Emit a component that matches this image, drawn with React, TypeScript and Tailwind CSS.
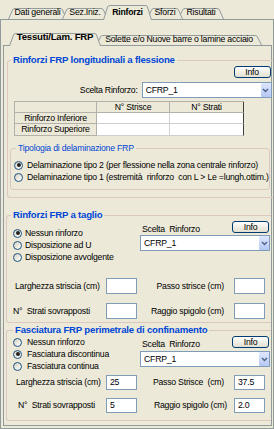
import React from "react";

type TabDef = {
  label: string;
  w: number;
  h: number;
  cls: string;
  selected?: boolean;
};

const outerTabs: TabDef[] = [
  { label: "Dati generali", w: 59, h: 11, cls: "w-[59px] h-[11px] z-[1]" },
  { label: "Sez.Iniz.", w: 46, h: 11, cls: "w-[46px] h-[11px] z-[2] -ml-[5px]" },
  { label: "Rinforzi", w: 49, h: 15, cls: "w-[49px] h-[15px] z-[10] -ml-[5px] -mb-[1px] pt-[3px] font-bold", selected: true },
  { label: "Sforzi", w: 36, h: 11, cls: "w-[36px] h-[11px] z-[4] -ml-[5px]" },
  { label: "Risultati", w: 46, h: 11, cls: "w-[46px] h-[11px] z-[3] -ml-[5px]" },
];

const innerTabs: TabDef[] = [
  { label: "Tessuti/Lam. FRP", w: 92, h: 13, cls: "w-[92px] h-[13px] z-[10] -mb-[1px] font-bold text-[9.6px] tracking-[-0.2px]", selected: true },
  { label: "Solette e/o Nuove barre o lamine acciaio", w: 166, h: 10, cls: "w-[166px] h-[10px] z-[1] -ml-[5px]" },
];

function Tab({ label, w, h, cls }: TabDef) {
  const s = 5;
  const d = `M0.5 ${h} L${s - 0.5} 2 Q${s} 0.5 ${s + 2} 0.5 L${w - s - 2} 0.5 Q${w - s} 0.5 ${w - s + 0.5} 2 L${w - 0.5} ${h}`;
  return (
    <div className={`relative shrink-0 flex justify-center items-start ${cls}`}>
      <svg className="absolute inset-0" width={w} height={h} viewBox={`0 0 ${w} ${h}`}>
        <path d={d} fill="#ece9d8" stroke="#919b9c" strokeWidth="1" />
      </svg>
      <span className="relative whitespace-nowrap leading-[8px]">{label}</span>
    </div>
  );
}

function InfoButton() {
  return (
    <button className="w-[37px] h-[12px] border border-[#003c74] rounded-[3px] bg-linear-to-b from-white to-[#e2dfcf] flex items-center justify-center leading-none">
      Info
    </button>
  );
}

function Select() {
  return (
    <div className="w-[130px] h-[16px] border border-[#7f9db9] bg-white flex items-center">
      <span className="flex-1 pl-[3px]">CFRP_1</span>
      <span className="w-[10px] h-[14px] bg-linear-to-b from-[#dfe7fd] to-[#b5c7f4] rounded-[1px] flex items-center justify-center">
        <svg width="7" height="5" viewBox="0 0 7 5">
          <path d="M1 1 L3.5 3.5 L6 1" fill="none" stroke="#4d6185" strokeWidth="1.4" />
        </svg>
      </span>
    </div>
  );
}

function Radio({ label, checked, gap = "ml-[4px]" }: { label: string; checked?: boolean; gap?: string }) {
  return (
    <div className="flex items-center h-[12px]">
      <span className="w-[9px] h-[9px] rounded-full border border-[#1c5180] bg-linear-to-br from-[#d6d3c2] to-white flex items-center justify-center shrink-0">
        {checked && <span className="w-[4px] h-[4px] rounded-full bg-[#222]" />}
      </span>
      <span className={`${gap} whitespace-pre`}>{label}</span>
    </div>
  );
}

function Input({ value }: { value?: string }) {
  return (
    <div className="w-[31px] self-stretch border border-[#7f9db9] bg-white pl-[3px] flex items-center">
      {value}
    </div>
  );
}

function FieldRow(props: {
  label: string;
  labelPad: string;
  value?: string;
  right: string;
  rightPad: string;
  rightValue?: string;
  box: string;
}) {
  return (
    <div className={`flex items-center ${props.box}`}>
      <div className={`w-[99px] whitespace-pre ${props.labelPad}`}>{props.label}</div>
      <Input value={props.value} />
      <div className={`w-[97px] text-right whitespace-pre ${props.rightPad}`}>{props.right}</div>
      <Input value={props.rightValue} />
    </div>
  );
}

function RightBlock({ selectGap }: { selectGap: string }) {
  return (
    <div className="ml-auto mr-[1px] w-[130px]">
      <div className="flex items-end justify-between h-[12px]">
        <span className="pl-[2px] whitespace-pre leading-[8px]">Scelta  Rinforzo</span>
        <div className="mr-[1px]">
          <InfoButton />
        </div>
      </div>
      <div className={selectGap}>
        <Select />
      </div>
    </div>
  );
}

const legendCls = "px-[2px] h-[12px] leading-[12px] text-[9.6px] font-bold tracking-[-0.2px] text-[#0046d5]";

export default function App() {
  return (
    <div className="w-[274px] h-[429px] overflow-hidden bg-[#ece9d8] font-['Liberation_Sans',Arial,sans-serif] text-[8.7px] tracking-[-0.22px] leading-none text-black">
      {/* Outer tabs */}
      <div className="flex items-end h-[19px] pl-[8px]">
        {outerTabs.map((t) => (
          <Tab key={t.label} {...t} />
        ))}
      </div>

      <div className="h-[410px] border border-[#919b9c]">
        {/* Inner tabs */}
        <div className="flex items-end h-[25px] pl-[8px]">
          {innerTabs.map((t) => (
            <Tab key={t.label} {...t} />
          ))}
        </div>

        <div className="ml-[2px] mr-[1px] h-[381px] border border-[#919b9c]">
          {/* Rinforzi longitudinali */}
          <fieldset className="ml-[3px] mt-[8px] border border-r-0 border-[#dcc8c0] rounded-l-[3px] pb-[7px]">
            <legend className={`ml-[3px] ${legendCls}`}>Rinforzi FRP longitudinali a flessione</legend>
            <div className="flex justify-end mr-[2px]">
              <InfoButton />
            </div>
            <div className="mt-[4px] flex items-center justify-end mr-[1px]">
              <span className="mr-[4px]">Scelta Rinforzo:</span>
              <Select />
            </div>
            <div className="mt-[3px] ml-[6px] w-[230px] grid grid-cols-[82px_73px_74px] border-l border-t border-[#b2b1aa]">
              <div className="h-[11px] border-r border-b border-[#b2b1aa]" />
              <div className="h-[11px] border-r border-b border-[#b2b1aa] flex items-center justify-center">N° Strisce</div>
              <div className="h-[11px] border-r border-b border-r-[#404040] border-b-[#b2b1aa] flex items-center justify-center">N° Strati</div>
              <div className="h-[11px] border-r border-b border-[#b2b1aa] flex items-center justify-center">Rinforzo Inferiore</div>
              <div className="h-[11px] border-r border-b border-[#d0d0d0] bg-white" />
              <div className="h-[11px] border-r border-b border-r-[#404040] border-b-[#d0d0d0] bg-white" />
              <div className="h-[12px] border-r border-b border-[#b2b1aa] flex items-center justify-center">Rinforzo Superiore</div>
              <div className="h-[12px] border-r border-b border-[#d0d0d0] bg-white" />
              <div className="h-[12px] border-r border-b border-r-[#404040] border-b-[#d0d0d0] bg-white" />
            </div>

            <fieldset className="mt-[7px] ml-[2px] mr-[3px] border border-[#dcc8c0] rounded-[3px] pb-[6px]">
              <legend className="ml-[5px] px-[2px] h-[10px] leading-[10px] text-[#0046d5]">Tipologia di delaminazione FRP</legend>
              <div className="pt-[6px] pl-[3px]">
                <Radio checked label="Delaminazione tipo 2 (per flessione nella zona centrale rinforzo)" />
                <Radio label="Delaminazione tipo 1 (estremità  rinforzo  con L > Le =lungh.ottim.)" />
              </div>
            </fieldset>
          </fieldset>

          {/* Rinforzi a taglio */}
          <fieldset className="ml-[2px] mt-[11px] border border-r-0 border-[#dcc8c0] rounded-l-[3px] pb-[3px]">
            <legend className={`ml-[4px] ${legendCls}`}>Rinforzi FRP a taglio</legend>
            <div className="flex">
              <div className="pt-[6px] pl-[6px]">
                <Radio checked label="Nessun rinforzo" gap="ml-[3px]" />
                <Radio label="Disposizione ad U" gap="ml-[3px]" />
                <Radio label="Disposizione avvolgente" gap="ml-[3px]" />
              </div>
              <RightBlock selectGap="mt-[2px]" />
            </div>
            <FieldRow
              box="mt-[15px] h-[16px]"
              label="Larghezza striscia (cm)"
              labelPad="pl-[8px]"
              right="Passo strisce (cm)"
              rightPad="pr-[10px]"
            />
            <FieldRow
              box="mt-[9px] h-[16px]"
              label="N°  Strati sovrapposti"
              labelPad="pl-[6px]"
              right="Raggio spigolo (cm)"
              rightPad="pr-[10px]"
            />
          </fieldset>

          {/* Fasciatura */}
          <fieldset className="ml-[2px] mt-[1px] border border-r-0 border-[#dcc8c0] rounded-l-[3px] pb-[7px]">
            <legend className={`ml-[6px] ${legendCls}`}>Fasciatura FRP perimetrale di confinamento</legend>
            <div className="flex">
              <div className="pl-[6px]">
                <Radio label="Nessun rinforzo" gap="ml-[5px]" />
                <Radio checked label="Fasciatura discontinua" gap="ml-[5px]" />
                <Radio label="Fasciatura continua" gap="ml-[5px]" />
              </div>
              <RightBlock selectGap="mt-[3px]" />
            </div>
            <FieldRow
              box="mt-[3px] h-[15px]"
              label="Larghezza striscia (cm)"
              labelPad="pl-[9px]"
              value="25"
              right="Passo Strisce  (cm)"
              rightPad="pr-[10px]"
              rightValue="37.5"
            />
            <FieldRow
              box="mt-[8px] h-[15px]"
              label="N°  Strati sovrapposti"
              labelPad="pl-[11px]"
              value="5"
              right="Raggio spigolo (cm)"
              rightPad="pr-[7px]"
              rightValue="2.0"
            />
          </fieldset>
        </div>
      </div>
    </div>
  );
}
